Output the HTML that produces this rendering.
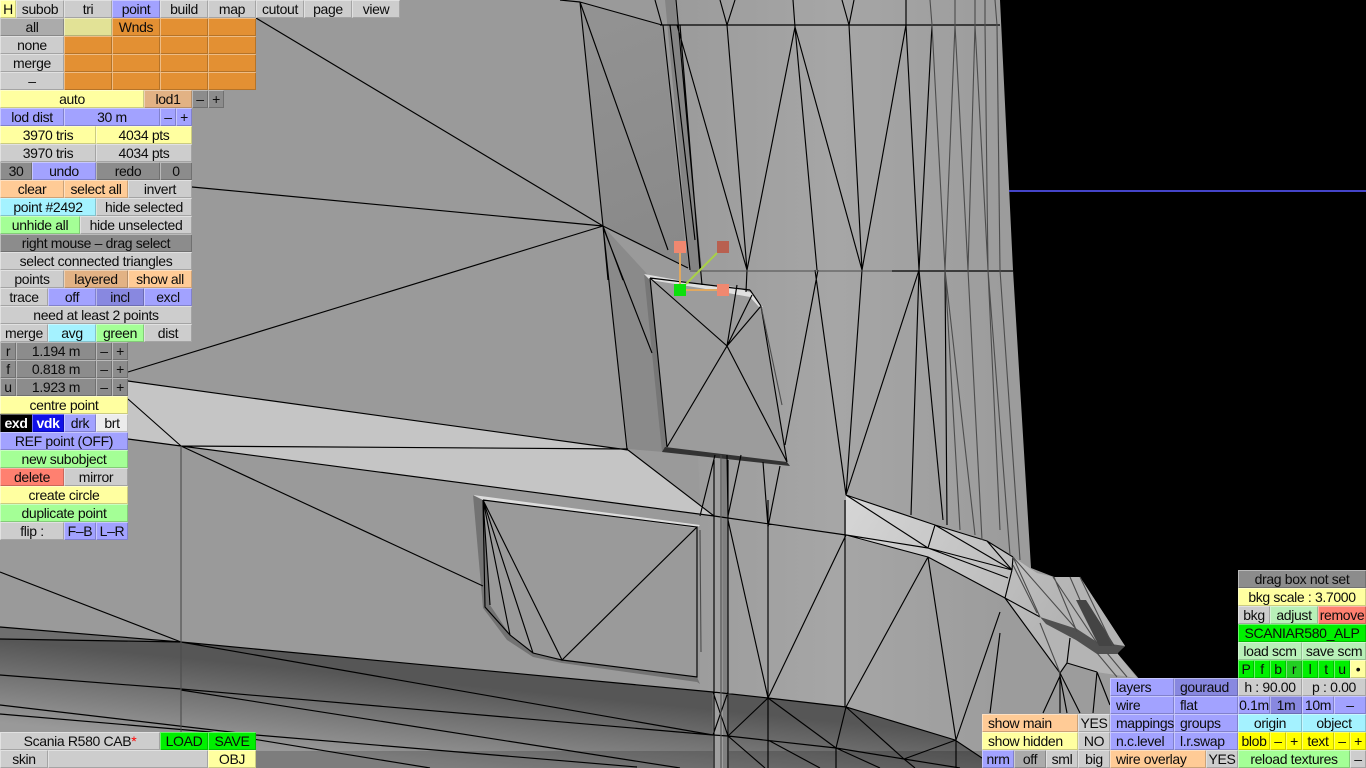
<!DOCTYPE html>
<html><head><meta charset="utf-8"><title>Scania R580 CAB</title>
<style>
html,body{margin:0;padding:0;background:#000;width:1366px;height:768px;overflow:hidden}
svg{position:absolute;left:0;top:0}
b{position:absolute;height:18px;font:14px/18px "Liberation Sans",sans-serif;letter-spacing:-.35px;color:#0c0c0c;text-align:center;white-space:nowrap;overflow:hidden;box-sizing:border-box;background:#ccc;box-shadow:inset 1px 1px 0 rgba(255,255,255,.4),inset -1px -1px 0 rgba(0,0,0,.2)}
.g{background:#cdcdcd}.d{background:#8c8c8c}.m{background:#ababab}.b{background:#a2a2ff}.e{background:#8888e0}.y{background:#ffffa0}.p{background:#e2e296}.o{background:#e39033}.t{background:#e2b284}.k{background:#ffcb96}.c{background:#a4f2ff}.n{background:#a4ff96}.r{background:#ff8070}.v{background:#00f000}.f{background:#22d022}.u{background:#ffff00}
.l{text-align:left;padding-left:6px}
</style></head><body>
<svg width="1366" height="768" viewBox="0 0 1366 768">
<defs>
<linearGradient id="main" x1="660" y1="0" x2="1010" y2="0" gradientUnits="userSpaceOnUse"><stop offset="0" stop-color="#9a9a9a"/><stop offset=".5" stop-color="#a6a6a6"/><stop offset="1" stop-color="#9c9c9c"/></linearGradient>
<linearGradient id="dk" x1="0" y1="640" x2="-8" y2="722" gradientUnits="userSpaceOnUse"><stop offset="0" stop-color="#565656"/><stop offset="1" stop-color="#999"/></linearGradient>
<linearGradient id="pan" x1="580" y1="0" x2="690" y2="270" gradientUnits="userSpaceOnUse"><stop offset="0" stop-color="#939393"/><stop offset="1" stop-color="#888"/></linearGradient>
<linearGradient id="br" x1="846" y1="500" x2="1060" y2="620" gradientUnits="userSpaceOnUse"><stop offset="0" stop-color="#d6d6d6"/><stop offset="1" stop-color="#b4b4b4"/></linearGradient>
</defs>
<rect width="1366" height="768" fill="#000"/>
<rect x="0" y="0" width="1140" height="768" fill="#9a9a9a"/>
<polygon points="662,0 1000,0 1013,270 1031,568 1054,577 1080,577 1125,646 1117,653 1140,680 1140,768 700,768 700,500 690,270" fill="url(#main)"/>
<polygon points="1000,0 1366,0 1366,768 1140,768 1140,680 1117,653 1125,646 1080,577 1054,577 1031,568 1013,270" fill="#000"/>
<rect x="1009" y="190" width="357" height="2" fill="#4444c8"/>
<polygon points="580,2 662,25 685,240 689,268 603,226" fill="url(#pan)"/>
<polygon points="603,226 648,275 664,452 628,449" fill="#8a8a8a"/>
<polygon points="128,381 628,450 714,516 181,446 128,439" fill="#c5c5c5"/>
<polygon points="846,495 935,525 987,541 1013,557 1037,573 1054,577 1080,577 1125,646 1117,653 1137,678 1096,672 1067,663 1060,673 1005,598 928,557 846,536" fill="url(#br)"/>
<polygon points="0,627 181,642 713,692 768,698 846,707 955,740 982,758 982,768 0,768" fill="url(#dk)"/>
<polygon points="0,627 181,642 0,639" fill="#6e6e6e"/>
<rect x="256" y="751" width="726" height="17" fill="#000" opacity=".18"/>
<polygon points="665,0 675,0 702,270 690,270" fill="#848484"/>
<polygon points="712,452 728,452 729,768 713,768" fill="#a0a0a0"/>
<polygon points="722,452 728,452 729,768 723,768" fill="#808080"/>
<polygon points="650,278 750,290 761,306 787,462 667,447" fill="#9c9c9c"/>
<polygon points="644,274 662,452 667,447 650,279" fill="#777"/>
<polygon points="644,274 700,284 735,287 752,293 763,307 759,307 750,297 700,288 650,280" fill="#e0e0e0"/>
<polygon points="665,447 787,462 790,466 662,452" fill="#333"/>
<polygon points="473,495 483,608 507,640 533,657 562,663 697,682 700,684 697,677 562,660 533,653 510,635 490,605 483,500" fill="#737373"/>
<polygon points="473,495 700,525 697,528 483,500" fill="#ddd"/>
<polygon points="1040,617 1077,629 1097,642 1125,646 1117,654 1097,654 1076,640 1046,624" fill="#505050"/>
<polygon points="1076,600 1086,600 1115,646 1099,646" fill="#444"/>
<path fill="none" stroke="#000" stroke-width="1.15" d="M560,0L580,2M256,18L603,226M192,187L603,226M128,372L603,226M580,2L603,226M580,2L668,250M603,226L688,268M603,226L627,449M603,227L652,353M603,226L608,280M603,226L623,280M580,2L662,25M655,0L662,25
M128,381L628,450M128,399L181,446M128,439L181,446M181,446L628,449M181,446L714,516L846,535M181,446L483,586M628,450L714,516
M0,572L181,642M0,627L181,642L713,692L768,698L846,707L955,740L982,758M0,639L181,642M181,642L713,735M0,675L181,689L713,735L728,736L836,748L904,759L960,768M181,690L680,768M0,705L256,735L637,767M0,714L210,732L430,768
M660,25H1000M892,271H1013M677,25L747,270M727,25L747,270M795,27L747,270M795,27L817,270M795,27L862,270M849,25L862,270M906,25L862,270M906,25L919,270M932,25L919,270M720,0L727,25M735,0L727,25M793,0L795,27M842,0L849,25M854,0L849,25M906,0V25
M663,25L690,270M676,0L702,285M670,25L695,240M680,25L700,270M747,270L746,292
M818,270L785,445M815,270L846,495M862,270L846,495M919,270L846,495M919,270L911,515M919,270L943,520M945,270L947,525
M650,278L750,290M650,278L727,346L787,462M667,447L727,346L761,306M727,346L737,285M727,346L752,295M650,278L667,447M761,306L787,462M750,290L761,306
M763,462L768,527M780,466L768,527M715,455L700,516M727,455L728,516M741,455L728,516
M483,500L697,527L562,660L483,500M483,500L533,653M483,500L510,635M483,500L490,605M483,500L485,607L510,635L533,653L562,660L697,677V527
M714,460V768M728,460V768M728,520L768,698M768,500V768M845,500V707M846,535L768,698M846,535L928,557M846,535L928,548M928,557L846,707M928,557L956,740M1000,612L956,740M1000,633L990,713
M846,495L935,525L987,541L1013,557M846,495L928,548M935,525L928,548M935,525L1012,570M928,548L1012,570M928,548L1008,578M928,557L1005,598M1012,570L1005,598M987,541L1012,570M1013,557L1012,570M1005,598L1060,673M1005,598L1040,617
M768,698L728,736M768,698L836,748M846,707L836,748M846,707L904,759M956,740L904,759M956,740V768M728,736L765,768M768,740L820,768M836,748V768M836,748L880,768M904,759L915,768
M713,692L728,736M728,692L713,735M1060,673L1080,713M1060,673V713M1060,676L1043,713M1060,676L1067,713M1097,672L1093,713M1097,672L1110,705M1067,663L1097,672M1070,638L1067,663M1067,663L1060,673"/>
<path fill="none" stroke="#4c4c4c" stroke-width="1.1" d="M181,446V768M690,271H892M932,25L945,270M955,25L945,270M955,25L968,270M975,25L968,270M975,25L988,270M985,25L988,270M997,25L1000,270M930,0L932,25M955,0V25M975,0V25M985,0V25M995,0L997,25M945,270L960,530M945,270L975,535M968,270L982,540M988,270L1000,530M988,270L1010,555M1000,270L1020,560M761,306L782,405M700,530L701,652M721,455V768
M1013,557L1040,617M1013,557L1077,630M1013,565L1037,613M1054,577L1077,632M1053,577L1097,643M1070,577L1080,600M1080,577L1113,646M1040,623L1060,673M1097,653L1117,677M1107,653L1127,677"/>
<path fill="none" stroke="#e0a860" stroke-width="2" d="M680,253V284M686,290H717"/>
<path fill="none" stroke="#a8d048" stroke-width="2" d="M686,284L717,253"/>
<rect x="674" y="284" width="12" height="12" fill="#0de00d"/>
<rect x="674" y="241" width="12" height="12" fill="#f08870"/>
<rect x="717" y="284" width="12" height="12" fill="#f08870"/>
<rect x="717" y="241" width="12" height="12" fill="#b86050"/>
</svg>

<b class="y" style="left:0;top:0;width:16px">H</b><b class="g" style="left:16px;top:0;width:48px">subob</b><b class="g" style="left:64px;top:0;width:48px">tri</b><b class="b" style="left:112px;top:0;width:48px">point</b><b class="g" style="left:160px;top:0;width:48px">build</b><b class="g" style="left:208px;top:0;width:48px">map</b><b class="g" style="left:256px;top:0;width:48px">cutout</b><b class="g" style="left:304px;top:0;width:48px">page</b><b class="g" style="left:352px;top:0;width:48px">view</b>

<b class="m" style="left:0;top:18px;width:64px">all</b><b class="p" style="left:64px;top:18px;width:48px"></b><b class="o" style="left:112px;top:18px;width:48px">Wnds</b><b class="o" style="left:160px;top:18px;width:48px"></b><b class="o" style="left:208px;top:18px;width:48px"></b>
<b class="g" style="left:0;top:36px;width:64px">none</b><b class="o" style="left:64px;top:36px;width:48px"></b><b class="o" style="left:112px;top:36px;width:48px"></b><b class="o" style="left:160px;top:36px;width:48px"></b><b class="o" style="left:208px;top:36px;width:48px"></b>
<b class="g" style="left:0;top:54px;width:64px">merge</b><b class="o" style="left:64px;top:54px;width:48px"></b><b class="o" style="left:112px;top:54px;width:48px"></b><b class="o" style="left:160px;top:54px;width:48px"></b><b class="o" style="left:208px;top:54px;width:48px"></b>
<b class="g" style="left:0;top:72px;width:64px">–</b><b class="o" style="left:64px;top:72px;width:48px"></b><b class="o" style="left:112px;top:72px;width:48px"></b><b class="o" style="left:160px;top:72px;width:48px"></b><b class="o" style="left:208px;top:72px;width:48px"></b>

<b class="y" style="left:0;top:90px;width:144px">auto</b><b class="t" style="left:144px;top:90px;width:48px">lod1</b><b class="d" style="left:192px;top:90px;width:16px">–</b><b class="d" style="left:208px;top:90px;width:16px">+</b>
<b class="b" style="left:0;top:108px;width:64px">lod dist</b><b class="b" style="left:64px;top:108px;width:96px">30 m</b><b class="b" style="left:160px;top:108px;width:16px">–</b><b class="b" style="left:176px;top:108px;width:16px">+</b>
<b class="y" style="left:0;top:126px;width:96px">3970 tris</b><b class="y" style="left:96px;top:126px;width:96px">4034 pts</b>
<b class="g" style="left:0;top:144px;width:96px">3970 tris</b><b class="g" style="left:96px;top:144px;width:96px">4034 pts</b>
<b class="d" style="left:0;top:162px;width:32px">30</b><b class="b" style="left:32px;top:162px;width:64px">undo</b><b class="d" style="left:96px;top:162px;width:64px">redo</b><b class="d" style="left:160px;top:162px;width:32px">0</b>
<b class="k" style="left:0;top:180px;width:64px">clear</b><b class="k" style="left:64px;top:180px;width:64px">select all</b><b class="g" style="left:128px;top:180px;width:64px">invert</b>
<b class="c" style="left:0;top:198px;width:96px">point #2492</b><b class="g" style="left:96px;top:198px;width:96px">hide selected</b>
<b class="n" style="left:0;top:216px;width:80px">unhide all</b><b class="g" style="left:80px;top:216px;width:112px">hide unselected</b>
<b class="d" style="left:0;top:234px;width:192px">right mouse – drag select</b>
<b class="g" style="left:0;top:252px;width:192px">select connected triangles</b>
<b class="g" style="left:0;top:270px;width:64px">points</b><b class="t" style="left:64px;top:270px;width:64px">layered</b><b class="k" style="left:128px;top:270px;width:64px">show all</b>
<b class="g" style="left:0;top:288px;width:48px">trace</b><b class="b" style="left:48px;top:288px;width:48px">off</b><b class="e" style="left:96px;top:288px;width:48px">incl</b><b class="b" style="left:144px;top:288px;width:48px">excl</b>
<b class="g" style="left:0;top:306px;width:192px">need at least 2 points</b>
<b class="g" style="left:0;top:324px;width:48px">merge</b><b class="c" style="left:48px;top:324px;width:48px">avg</b><b class="n" style="left:96px;top:324px;width:48px">green</b><b class="g" style="left:144px;top:324px;width:48px">dist</b>
<b class="d" style="left:0;top:342px;width:16px">r</b><b class="d" style="left:16px;top:342px;width:80px">1.194 m</b><b class="d" style="left:96px;top:342px;width:16px">–</b><b class="d" style="left:112px;top:342px;width:16px">+</b>
<b class="d" style="left:0;top:360px;width:16px">f</b><b class="d" style="left:16px;top:360px;width:80px">0.818 m</b><b class="d" style="left:96px;top:360px;width:16px">–</b><b class="d" style="left:112px;top:360px;width:16px">+</b>
<b class="d" style="left:0;top:378px;width:16px">u</b><b class="d" style="left:16px;top:378px;width:80px">1.923 m</b><b class="d" style="left:96px;top:378px;width:16px">–</b><b class="d" style="left:112px;top:378px;width:16px">+</b>
<b class="y" style="left:0;top:396px;width:128px">centre point</b>
<b style="left:0;top:414px;width:32px;background:#000;color:#fff;font-weight:700">exd</b><b style="left:32px;top:414px;width:32px;background:#1010e8;color:#fff;font-weight:700">vdk</b><b class="b" style="left:64px;top:414px;width:32px">drk</b><b style="left:96px;top:414px;width:32px;background:#ececec">brt</b>
<b class="b" style="left:0;top:432px;width:128px">REF point (OFF)</b>
<b class="n" style="left:0;top:450px;width:128px">new subobject</b>
<b class="r" style="left:0;top:468px;width:64px">delete</b><b class="g" style="left:64px;top:468px;width:64px">mirror</b>
<b class="y" style="left:0;top:486px;width:128px">create circle</b>
<b class="n" style="left:0;top:504px;width:128px">duplicate point</b>
<b class="g" style="left:0;top:522px;width:64px">flip :</b><b class="b" style="left:64px;top:522px;width:32px">F–B</b><b class="b" style="left:96px;top:522px;width:32px">L–R</b>

<b class="g" style="left:0;top:732px;width:160px">Scania R580 CAB<span style="color:#f00">*</span></b><b class="v" style="left:160px;top:732px;width:48px">LOAD</b><b class="v" style="left:208px;top:732px;width:48px">SAVE</b>
<b class="g" style="left:0;top:750px;width:48px">skin</b><b class="g" style="left:48px;top:750px;width:160px"></b><b class="y" style="left:208px;top:750px;width:48px">OBJ</b>

<b class="d" style="left:1238px;top:570px;width:128px">drag box not set</b>
<b class="y" style="left:1238px;top:588px;width:128px">bkg scale : 3.7000</b>
<b class="g" style="left:1238px;top:606px;width:32px">bkg</b><b class="n" style="left:1270px;top:606px;width:48px;background:#b8f0b8">adjust</b><b class="r" style="left:1318px;top:606px;width:48px">remove</b>
<b class="v" style="left:1238px;top:624px;width:128px">SCANIAR580_ALP</b>
<b class="n" style="left:1238px;top:642px;width:64px;background:#b8f0b8">load scm</b><b class="n" style="left:1302px;top:642px;width:64px;background:#b8f0b8">save scm</b>
<b class="v" style="left:1238px;top:660px;width:16px">P</b><b class="v" style="left:1254px;top:660px;width:16px">f</b><b class="v" style="left:1270px;top:660px;width:16px">b</b><b class="f" style="left:1286px;top:660px;width:16px">r</b><b class="v" style="left:1302px;top:660px;width:16px">l</b><b class="v" style="left:1318px;top:660px;width:16px">t</b><b class="v" style="left:1334px;top:660px;width:16px">u</b><b class="y" style="left:1350px;top:660px;width:16px">•</b>
<b class="g" style="left:1238px;top:678px;width:64px">h : 90.00</b><b class="g" style="left:1302px;top:678px;width:64px">p : 0.00</b>
<b class="b" style="left:1238px;top:696px;width:32px">0.1m</b><b class="e" style="left:1270px;top:696px;width:32px">1m</b><b class="b" style="left:1302px;top:696px;width:32px">10m</b><b class="b" style="left:1334px;top:696px;width:32px">–</b>
<b class="c" style="left:1238px;top:714px;width:64px">origin</b><b class="c" style="left:1302px;top:714px;width:64px">object</b>
<b class="u" style="left:1238px;top:732px;width:32px">blob</b><b class="u" style="left:1270px;top:732px;width:16px">–</b><b class="u" style="left:1286px;top:732px;width:16px">+</b><b class="u" style="left:1302px;top:732px;width:32px">text</b><b class="u" style="left:1334px;top:732px;width:16px">–</b><b class="u" style="left:1350px;top:732px;width:16px">+</b>
<b class="n" style="left:1238px;top:750px;width:112px">reload textures</b><b class="g" style="left:1350px;top:750px;width:16px">–</b>

<b class="b l" style="left:1110px;top:678px;width:64px">layers</b><b class="e l" style="left:1174px;top:678px;width:64px">gouraud</b>
<b class="b l" style="left:1110px;top:696px;width:64px">wire</b><b class="b l" style="left:1174px;top:696px;width:64px">flat</b>
<b class="b l" style="left:1110px;top:714px;width:64px">mappings</b><b class="b l" style="left:1174px;top:714px;width:64px">groups</b>
<b class="b l" style="left:1110px;top:732px;width:64px">n.c.level</b><b class="b l" style="left:1174px;top:732px;width:64px">l.r.swap</b>
<b class="k l" style="left:1110px;top:750px;width:96px">wire overlay</b><b class="g" style="left:1206px;top:750px;width:32px">YES</b>

<b class="k l" style="left:982px;top:714px;width:96px">show main</b><b class="g" style="left:1078px;top:714px;width:32px">YES</b>
<b class="y l" style="left:982px;top:732px;width:96px">show hidden</b><b class="g" style="left:1078px;top:732px;width:32px">NO</b>
<b class="b" style="left:982px;top:750px;width:32px">nrm</b><b class="m" style="left:1014px;top:750px;width:32px">off</b><b class="g" style="left:1046px;top:750px;width:32px">sml</b><b class="g" style="left:1078px;top:750px;width:32px">big</b>
</body></html>
